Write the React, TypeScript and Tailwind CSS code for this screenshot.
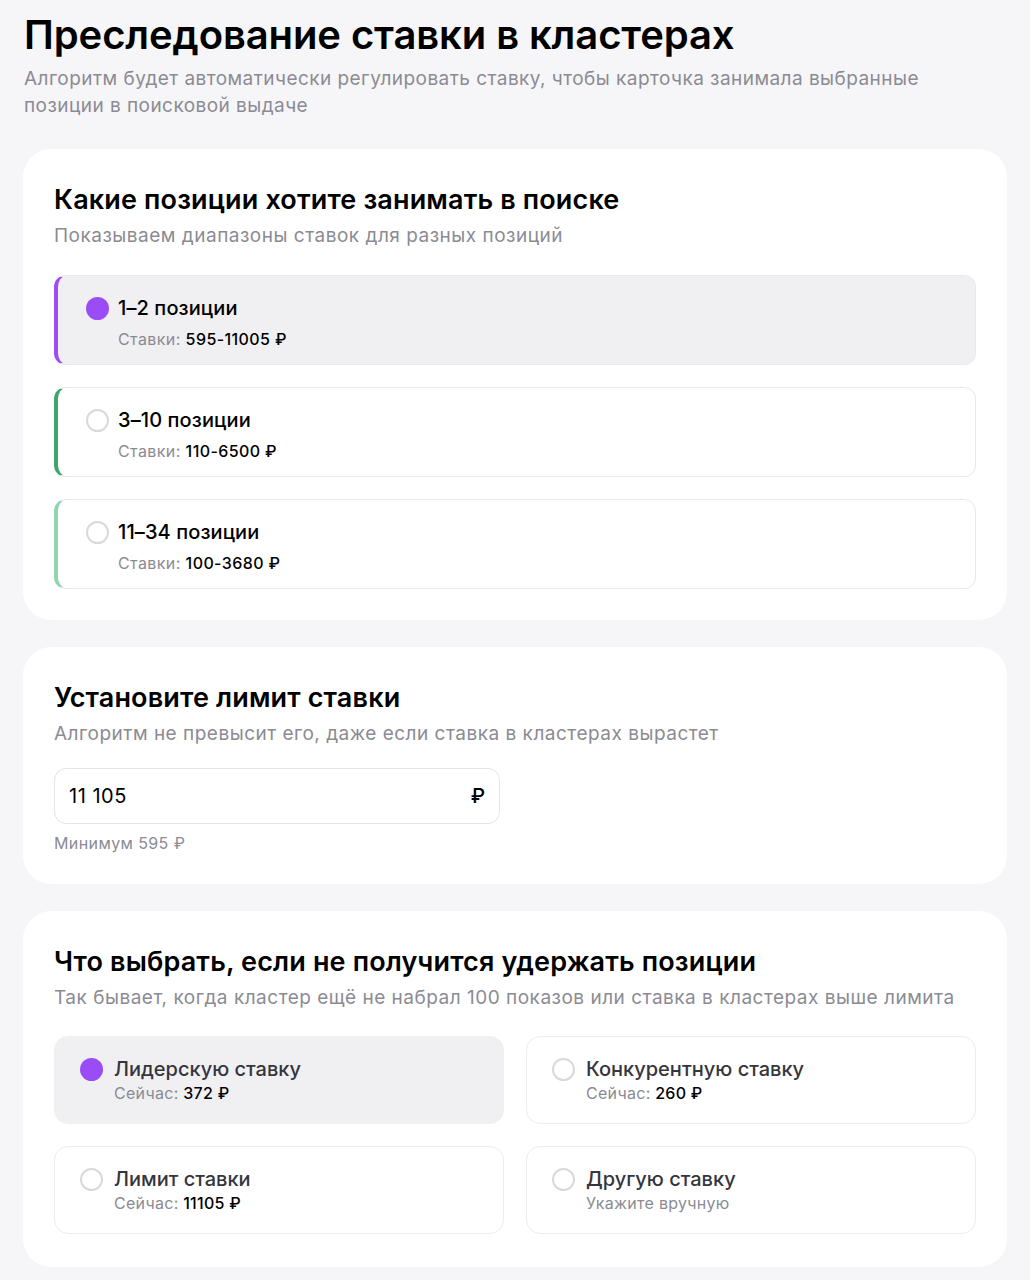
import React from "react";

const font = { fontFamily: "Inter, 'Noto Sans', sans-serif" };

function Radio({ selected }: { selected: boolean }) {
  return selected ? (
    <span className="block w-[23px] h-[23px] rounded-full bg-[#9a4cf7] shrink-0" />
  ) : (
    <span className="block w-[23px] h-[23px] rounded-full border-2 border-[#d9d9dd] bg-white shrink-0" />
  );
}

function PosOption({
  title,
  range,
  selected,
  barClass,
}: {
  title: string;
  range: string;
  selected: boolean;
  barClass: string;
}) {
  return (
    <div
      className={`h-[90px] rounded-[12px] border border-[#e9e9ed] border-l-4 ${barClass} ${
        selected ? "bg-[#f0f0f3]" : "bg-white"
      } pl-[28px] pt-[20px]`}
    >
      <div className="flex items-center gap-[9px]">
        <Radio selected={selected} />
        <span className="text-[20px] leading-[24px] text-black font-medium tracking-[0.1px]">{title}</span>
      </div>
      <div className="pl-[32px] mt-[9px] text-[16px] leading-[20px] text-[#8b8b93] tracking-[0.4px]">
        Ставки: <span className="text-black font-medium">{range}</span>
      </div>
    </div>
  );
}

function FallbackOption({
  title,
  sub,
  value,
  selected,
}: {
  title: string;
  sub: string;
  value?: string;
  selected: boolean;
}) {
  return (
    <div
      className={`h-[88px] rounded-[14px] border ${
        selected ? "border-[#f0f0f3] bg-[#f0f0f3]" : "border-[#ececf0] bg-white"
      } pl-[25px] pt-[20px]`}
    >
      <div className="flex items-center gap-[11px]">
        <Radio selected={selected} />
        <span className="text-[20px] leading-[24px] text-[#35353d] font-medium">{title}</span>
      </div>
      <div className="pl-[34px] mt-[2px] text-[16px] leading-[20px] text-[#8b8b93] tracking-[0.3px]">
        {sub}
        {value && <span className="text-black font-medium"> {value}</span>}
      </div>
    </div>
  );
}

function CardHeader({ title, sub }: { title: string; sub: string }) {
  return (
    <div>
      <h2 className="text-[27px] leading-[34px] font-semibold text-black tracking-[0.15px]">{title}</h2>
      <p className="mt-[6px] text-[19px] leading-[26px] text-[#8b8b93] tracking-[0.5px]">{sub}</p>
    </div>
  );
}

export default function App() {
  return (
    <div className="min-h-[1280px] bg-[#f6f6f8] px-[23px] pt-[11px] pb-[12px]" style={font}>
      <h1 className="pl-[1px] text-[40px] leading-[48px] font-semibold text-black tracking-[-0.1px]">
        Преследование ставки в кластерах
      </h1>
      <p className="pl-[1px] mt-[6px] text-[19px] leading-[27px] text-[#8b8b93] tracking-[0.45px] max-w-[940px]">
        Алгоритм будет автоматически регулировать ставку, чтобы карточка занимала выбранные позиции в поисковой выдаче
      </p>

      <section className="mt-[30px] bg-white rounded-[28px] px-[31px] pt-[34px] pb-[31px]">
        <CardHeader
          title="Какие позиции хотите занимать в поиске"
          sub="Показываем диапазоны ставок для разных позиций"
        />
        <div className="mt-[26px] flex flex-col gap-[22px]">
          <PosOption title="1–2 позиции" range="595-11005 ₽" selected barClass="border-l-[#a04cf6]" />
          <PosOption title="3–10 позиции" range="110-6500 ₽" selected={false} barClass="border-l-[#3ea56e]" />
          <PosOption title="11–34 позиции" range="100-3680 ₽" selected={false} barClass="border-l-[#8fd5b0]" />
        </div>
      </section>

      <section className="mt-[27px] bg-white rounded-[28px] px-[31px] pt-[34px] pb-[31px]">
        <CardHeader
          title="Установите лимит ставки"
          sub="Алгоритм не превысит его, даже если ставка в кластерах вырастет"
        />
        <div className="mt-[21px] w-[446px] h-[56px] rounded-[12px] border border-[#e4e4e8] bg-white flex items-center justify-between pl-[14px] pr-[14px]">
          <span className="text-[20px] text-black tracking-[0.5px]">11 105</span>
          <span className="text-[20px] text-black font-medium">₽</span>
        </div>
        <div className="mt-[9px] text-[16px] leading-[20px] text-[#8b8b93] tracking-[0.4px]">Минимум 595 ₽</div>
      </section>

      <section className="mt-[27px] bg-white rounded-[28px] px-[31px] pt-[34px] pb-[33px]">
        <CardHeader
          title="Что выбрать, если не получится удержать позиции"
          sub="Так бывает, когда кластер ещё не набрал 100 показов или ставка в кластерах выше лимита"
        />
        <div className="mt-[25px] grid grid-cols-2 gap-x-[22px] gap-y-[22px]">
          <FallbackOption title="Лидерскую ставку" sub="Сейчас:" value="372 ₽" selected />
          <FallbackOption title="Конкурентную ставку" sub="Сейчас:" value="260 ₽" selected={false} />
          <FallbackOption title="Лимит ставки" sub="Сейчас:" value="11105 ₽" selected={false} />
          <FallbackOption title="Другую ставку" sub="Укажите вручную" selected={false} />
        </div>
      </section>
    </div>
  );
}
